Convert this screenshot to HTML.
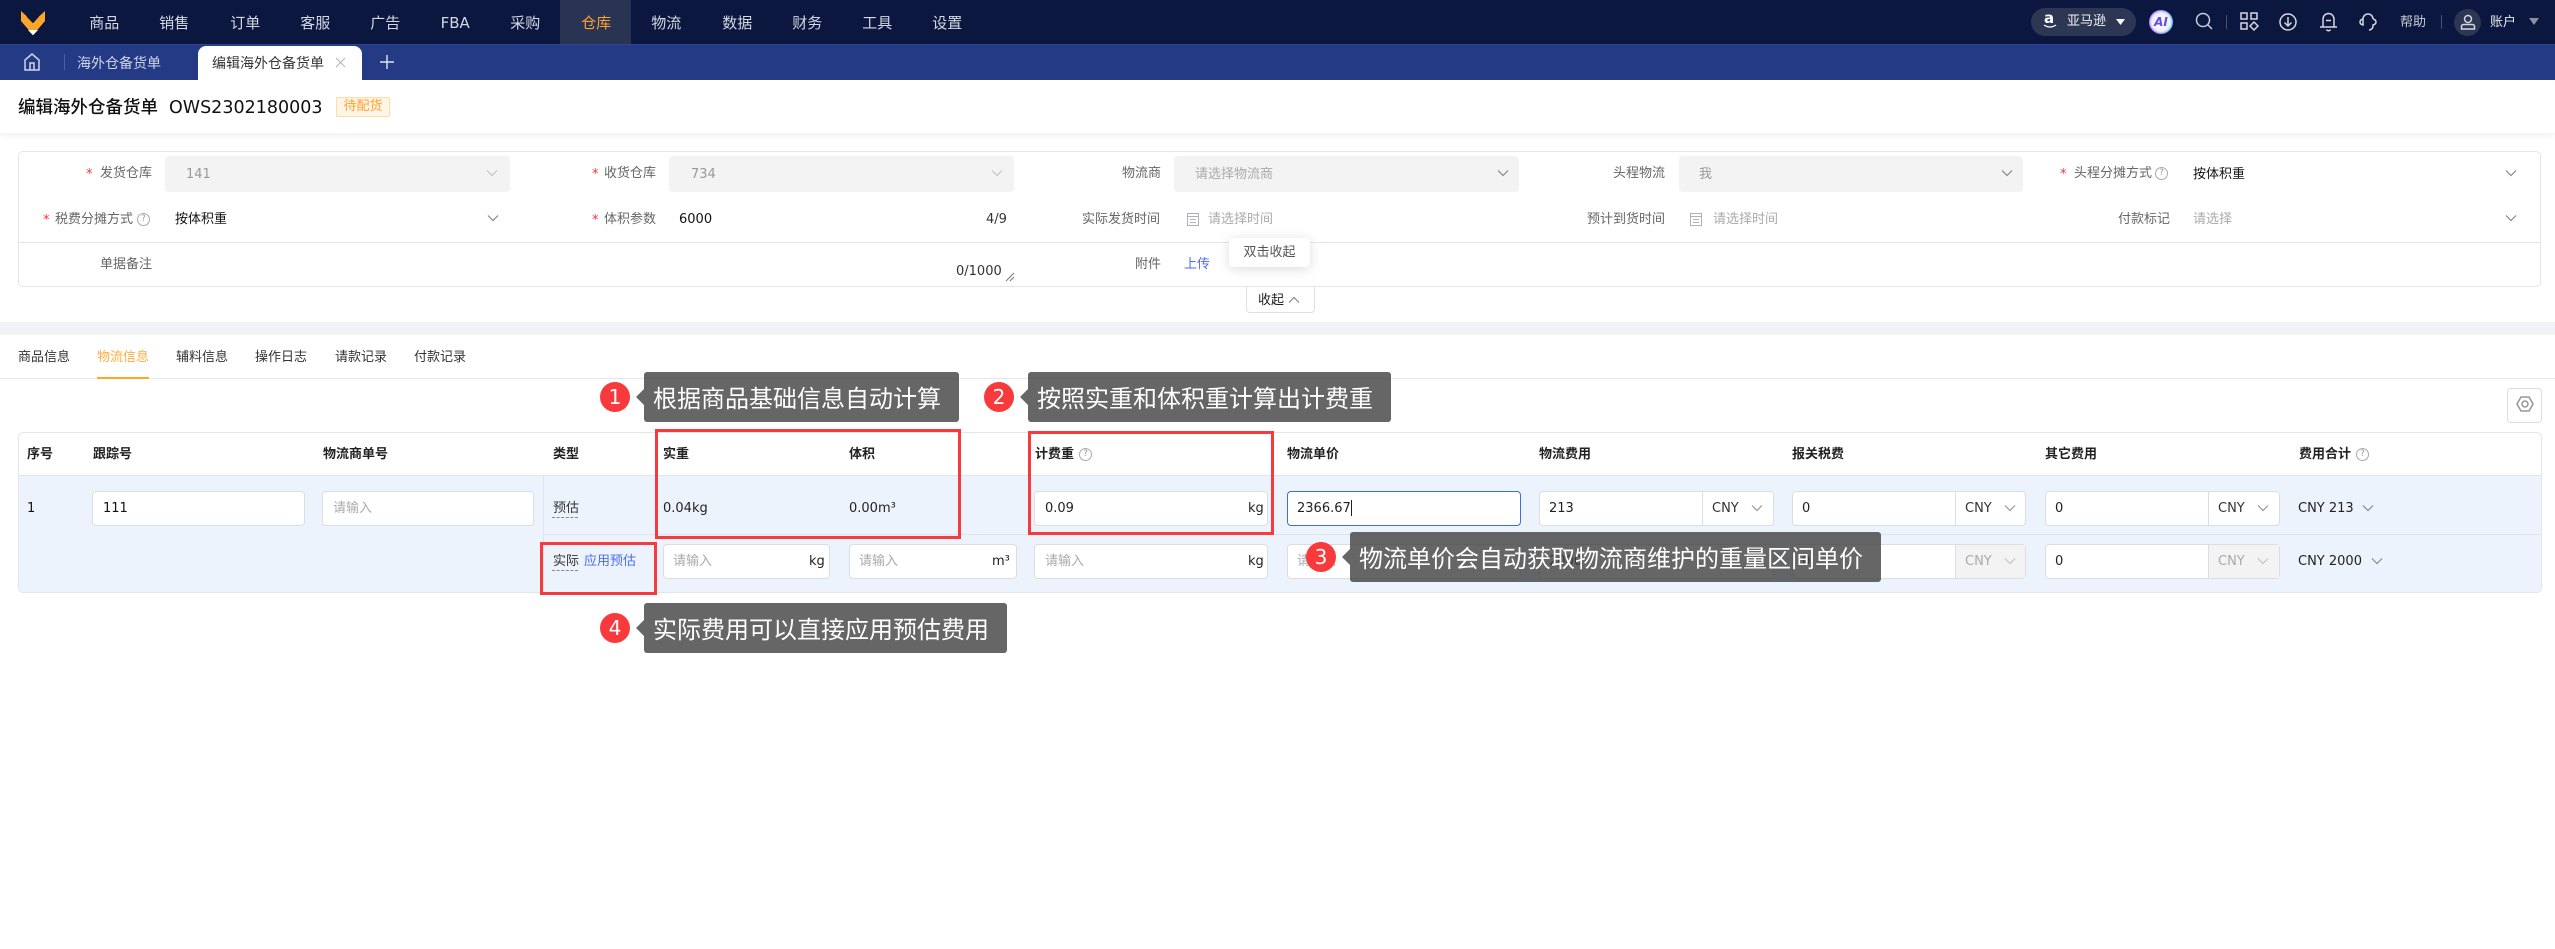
<!DOCTYPE html>
<html lang="zh"><head><meta charset="utf-8"><title>编辑海外仓备货单</title>
<style>
*{box-sizing:border-box}
html,body{margin:0;padding:0;width:2555px;height:949px;overflow:hidden;background:#fff}
body{font-family:"DejaVu Sans","WenQuanYi Zen Hei","Noto Sans CJK SC",sans-serif;font-size:13px;color:#222;position:relative}
.a{position:absolute}
.t{position:absolute;white-space:nowrap;line-height:20px;height:20px;margin-top:1px}
.n{position:absolute;top:13px;width:70.4px;text-align:center;color:#d4d8e2;font-size:15px;line-height:20px;white-space:nowrap}
.l{color:#666}
.r{color:#f5333f}
.g{color:#aaa}
.sel{position:absolute;height:36px;top:156px;background:#f3f3f4;border-radius:4px}
.inp{position:absolute;height:35px;background:#fff;border:1.5px solid #dcdde3;border-radius:4px}
.h{font-weight:700;color:#222}
.tip{position:absolute;height:50px;background:rgba(64,64,64,.8);border-radius:3px;color:#fff;font-family:"Noto Sans CJK SC",sans-serif;font-size:24px;line-height:50px;padding-left:9px;white-space:nowrap;font-weight:400}
.tip:before{content:"";position:absolute;left:-8px;top:17px;border:8px solid transparent;border-left:0;border-right-color:rgba(64,64,64,.8)}
.num{position:absolute;width:30px;height:30px;border-radius:50%;background:#f93a3c;color:#fff;font-size:20px;line-height:30px;text-align:center}
.box{position:absolute;border:3px solid #f93a3c}
svg.i{position:absolute;overflow:visible}
.d{position:absolute;width:1px;background:#dcdde3}
.q{position:absolute;width:13px;height:13px;border:1px solid #aaa;border-radius:50%;color:#999;font-size:9px;line-height:11px;text-align:center}
</style></head><body>
<svg width="0" height="0" style="position:absolute"><defs>
<symbol id="ch" viewBox="0 0 12 12"><path d="M1 3.5L6 8.5L11 3.5" fill="none" stroke="currentColor" stroke-width="1.2"/></symbol>
<symbol id="cal" viewBox="0 0 12 14"><path d="M.5 1.5h11v12H.5zM.5 4.5h11M3 7.5h6M3 10.5h6" fill="none" stroke="currentColor"/></symbol>
</defs></svg>

<!-- top bar -->
<div class="a" style="left:0;top:0;width:2555px;height:44px;background:#0b173e"></div>
<div class="a" style="left:0;top:44px;width:2555px;height:36px;background:#243a85;border-top:1px solid #2b4494"></div>
<div class="a" style="left:560px;top:0;width:71px;height:44px;background:#293352"></div>
<svg class="i" style="left:20px;top:10px" width="26" height="26" viewBox="20 10 26 26">
<path d="M21 11L33 22L45 11V21L33 35L21 21Z" fill="#f9a62a"/>
<path d="M27 16.5L33 22.5L38.5 16.5" fill="none" stroke="#0b173e" stroke-width="1"/>
<path d="M28 30H38L33 35.2Z" fill="#fff"/></svg>
<div class="n" style="left:69px">商品</div><div class="n" style="left:139px">销售</div><div class="n" style="left:210px">订单</div><div class="n" style="left:280px">客服</div><div class="n" style="left:350px">广告</div><div class="n" style="left:420px">FBA</div><div class="n" style="left:490px">采购</div><div class="n" style="left:561px;color:#ff9f2e">仓库</div><div class="n" style="left:631px">物流</div><div class="n" style="left:702px">数据</div><div class="n" style="left:772px">财务</div><div class="n" style="left:842px">工具</div><div class="n" style="left:912px">设置</div>

<div class="a" style="left:2031px;top:8px;width:105px;height:28px;border-radius:14px;background:#2d3652"></div>
<div class="t" style="left:2044px;top:7px;color:#fff;font-weight:700;font-size:15px">a</div>
<svg class="i" style="left:2043px;top:24px" width="14" height="6"><path d="M1 1Q7 5 13 1" fill="none" stroke="#fff" stroke-width="1.3"/></svg>
<div class="t" style="left:2067px;top:11px;color:#eef0f5">亚马逊</div>
<svg class="i" style="left:2116px;top:19px" width="9" height="6"><path d="M0 0H9L4.5 6Z" fill="#fff"/></svg>
<div class="a" style="left:2149px;top:10px;width:24px;height:24px;border-radius:50%;background:radial-gradient(circle,#fff 0,#f1eefe 55%,transparent 72%),linear-gradient(100deg,#a874f5,#8a7cf8 50%,#2cc8ee);text-align:center;color:#5a4fe8;font-weight:700;font-style:italic;font-size:12px;line-height:24px">AI</div>
<svg class="i" style="left:2195px;top:12px" width="18" height="18" fill="none" stroke="#c9ccd4" stroke-width="1.5"><circle cx="8" cy="8" r="6.5"/><path d="M12.5 12.5L17 17"/></svg>
<div class="a" style="left:2226px;top:15px;width:1px;height:14px;background:#4a5270"></div>
<svg class="i" style="left:2240px;top:12px" width="18" height="18" fill="none" stroke="#d5d7dd" stroke-width="1.5"><path d="M1 1h6v6H1zM11 1h6v6h-6zM1 11h6v6H1zM14 10l4 4-4 4-4-4z"/></svg>
<svg class="i" style="left:2279px;top:13px" width="18" height="18" fill="none" stroke="#d5d7dd" stroke-width="1.5"><circle cx="9" cy="9" r="8"/><path d="M9 4v9M5.500 9.500L9 13l3.500-3.500"/></svg>
<svg class="i" style="left:2319px;top:12px" width="19" height="20" fill="none" stroke="#d5d7dd" stroke-width="1.5"><path d="M4 15V7a5.500 5.500 0 0 1 11 0v8M1 15h17M7 8.500h5M7.500 17.500a2.200 2.200 0 0 0 4 0"/></svg>
<svg class="i" style="left:2359px;top:12px" width="18" height="20" fill="none" stroke="#d5d7dd" stroke-width="1.500"><path d="M4 7a5 5 0 0 1 10 0M4 7c-2 .5-3 1.500-3 3s1 2.500 3 3zM14 7c2 .5 3 1.500 3 3s-1 2.500-3 3v1a4 4 0 0 1-4 4"/></svg>
<div class="t" style="left:2400px;top:12px;color:#c9ccd4">帮助</div>
<div class="a" style="left:2441px;top:15px;width:1px;height:14px;background:#4a5270"></div>
<div class="a" style="left:2454px;top:9px;width:27px;height:27px;border-radius:50%;background:#2d3652"></div>
<svg class="i" style="left:2460px;top:14px" width="16" height="16" fill="none" stroke="#d5d7dd" stroke-width="1.500"><circle cx="8" cy="5" r="3.500"/><path d="M1.500 15v-2.500a2 2 0 0 1 2-2h9a2 2 0 0 1 2 2V15z"/></svg>
<div class="t" style="left:2490px;top:12px;color:#e8eaf0">账户</div>
<svg class="i" style="left:2529px;top:18px" width="10" height="7"><path d="M0 0H10L5 7Z" fill="#8b90a0"/></svg>

<!-- tabs -->
<svg class="i" style="left:24px;top:53px" width="16" height="18" fill="none" stroke="#cfd6ea" stroke-width="1.500"><path d="M1 17V7L8 1l7 6v10zM6 17v-7h4v7"/></svg>
<div class="a" style="left:64px;top:54px;width:1px;height:16px;background:#4a5fa3"></div>
<div class="t" style="left:77px;top:53px;color:#cfd6ea;font-size:14px">海外仓备货单</div>
<div class="a" style="left:198px;top:46px;width:164px;height:34px;background:#fff;border-radius:8px 8px 0 0"></div>
<div class="t" style="left:212px;top:53px;color:#333;font-size:14px">编辑海外仓备货单</div>
<svg class="i" style="left:336px;top:58px" width="9" height="9" fill="none" stroke="#aeb4c6" stroke-width="1"><path d="M0 0L9 9M9 0L0 9"/></svg>
<svg class="i" style="left:380px;top:55px" width="14" height="14" fill="none" stroke="#dfe4f2" stroke-width="1.400"><path d="M7 0v14M0 7h14"/></svg>

<!-- header -->
<div class="a" style="left:0;top:80px;width:2555px;height:53px;background:#fff;border-radius:6px 6px 0 0;box-shadow:0 3px 6px rgba(0,0,0,.06)"></div>
<div class="t" style="left:18px;top:97px;font-size:17.5px;color:#111;font-weight:500">编辑海外仓备货单</div>
<div class="t" style="left:169px;top:97px;font-size:17.5px;color:#111">OWS2302180003</div>
<div class="a" style="left:336px;top:97px;width:54px;height:20px;background:#fff5e6;border:1px solid #fcdca8;border-radius:2px;color:#ff9f2e;text-align:center;line-height:18px">待配货</div>

<!-- form -->
<div class="a" style="left:18px;top:151px;width:2523px;height:136px;border:1.500px solid #e4e5e9;border-radius:5px"></div>
<div class="a" style="left:19px;top:242px;width:2521px;height:1px;background:#e4e5e9"></div>

<div class="sel" style="left:165px;width:345px"></div>
<div class="sel" style="left:669px;width:345px"></div>
<div class="sel" style="left:1174px;width:345px"></div>
<div class="sel" style="left:1679px;width:344px"></div>

<div class="t r" style="left:86px;top:164px">*</div><div class="t l" style="left:100px;top:163px">发货仓库</div>
<div class="t g" style="left:186px;top:164px;color:#999">141</div>
<svg class="i" style="left:486px;top:167px;color:#c4c4c4" width="12" height="12"><use href="#ch"/></svg>
<div class="t r" style="left:592px;top:164px">*</div><div class="t l" style="left:604px;top:163px">收货仓库</div>
<div class="t" style="left:691px;top:164px;color:#999">734</div>
<svg class="i" style="left:991px;top:167px;color:#c4c4c4" width="12" height="12"><use href="#ch"/></svg>
<div class="t l" style="left:1122px;top:163px">物流商</div>
<div class="t g" style="left:1195px;top:164px">请选择物流商</div>
<svg class="i" style="left:1497px;top:167px;color:#888" width="12" height="12"><use href="#ch"/></svg>
<div class="t l" style="left:1613px;top:163px">头程物流</div>
<div class="t" style="left:1699px;top:164px;color:#999">我</div>
<svg class="i" style="left:2001px;top:167px;color:#888" width="12" height="12"><use href="#ch"/></svg>
<div class="t r" style="left:2060px;top:164px">*</div><div class="t l" style="left:2074px;top:163px">头程分摊方式</div>
<div class="q" style="left:2155px;top:167px">?</div>
<div class="t" style="left:2193px;top:164px;color:#111">按体积重</div>
<svg class="i" style="left:2505px;top:167px;color:#888" width="12" height="12"><use href="#ch"/></svg>

<div class="t r" style="left:43px;top:210px">*</div><div class="t l" style="left:55px;top:209px">税费分摊方式</div>
<div class="q" style="left:137px;top:213px">?</div>
<div class="t" style="left:175px;top:209px;color:#111">按体积重</div>
<svg class="i" style="left:487px;top:212px;color:#888" width="12" height="12"><use href="#ch"/></svg>
<div class="t r" style="left:592px;top:210px">*</div><div class="t l" style="left:604px;top:209px">体积参数</div>
<div class="t" style="left:679px;top:209px;color:#111">6000</div>
<div class="t" style="left:986px;top:209px;color:#333">4/9</div>
<div class="t l" style="left:1082px;top:209px">实际发货时间</div>
<svg class="i" style="left:1187px;top:212px;color:#aab0bc" width="12" height="14"><use href="#cal"/></svg>
<div class="t g" style="left:1208px;top:209px">请选择时间</div>
<div class="t l" style="left:1587px;top:209px">预计到货时间</div>
<svg class="i" style="left:1690px;top:212px;color:#aab0bc" width="12" height="14"><use href="#cal"/></svg>
<div class="t g" style="left:1713px;top:209px">请选择时间</div>
<div class="t l" style="left:2118px;top:209px">付款标记</div>
<div class="t g" style="left:2193px;top:209px">请选择</div>
<svg class="i" style="left:2505px;top:212px;color:#888" width="12" height="12"><use href="#ch"/></svg>

<div class="t l" style="left:100px;top:254px">单据备注</div>
<div class="t" style="left:956px;top:261px;color:#333">0/1000</div>
<svg class="i" style="left:1006px;top:273px" width="8" height="8" stroke="#777" fill="none"><path d="M0 8L8 0M4 8L8 4"/></svg>
<div class="t l" style="left:1135px;top:254px">附件</div>
<div class="t" style="left:1184px;top:254px;color:#4a6cf7">上传</div>
<div class="a" style="left:1229px;top:238px;width:81px;height:29px;background:#fff;border-radius:4px;box-shadow:0 2px 12px rgba(0,0,0,.14);text-align:center;line-height:29px;color:#555">双击收起</div>
<div class="a" style="left:1246px;top:287px;width:69px;height:26px;background:#fff;border:1px solid #dedfe3;border-top:0;border-radius:0 0 4px 4px"></div>
<div class="t" style="left:1258px;top:290px;color:#222">收起</div>
<svg class="i" style="left:1288px;top:294px;color:#888;transform:rotate(180deg)" width="12" height="12"><use href="#ch"/></svg>

<!-- band -->
<div class="a" style="left:0;top:322px;width:2555px;height:13px;background:#f2f3f7"></div>

<!-- sub tabs -->
<div class="t" style="left:18px;top:347px;color:#333">商品信息</div>
<div class="t" style="left:97px;top:347px;color:#ffad3d">物流信息</div>
<div class="t" style="left:176px;top:347px;color:#333">辅料信息</div>
<div class="t" style="left:255px;top:347px;color:#333">操作日志</div>
<div class="t" style="left:335px;top:347px;color:#333">请款记录</div>
<div class="t" style="left:414px;top:347px;color:#333">付款记录</div>
<div class="a" style="left:0;top:378px;width:2555px;height:1px;background:#e6e7eb"></div>
<div class="a" style="left:97px;top:377px;width:52px;height:2px;background:#ffa826"></div>

<!-- settings -->
<div class="a" style="left:2507px;top:388px;width:35px;height:35px;border:1px solid #dcdde3;border-radius:4px"></div>
<svg class="i" style="left:2516px;top:396px" width="18" height="16" fill="none" stroke="#999" stroke-width="1.600"><path d="M5 1h8l4 7-4 7H5L1 8z"/><circle cx="9" cy="8" r="3"/></svg>

<!-- table -->
<div class="a" style="left:18px;top:432px;width:2524px;height:161px;border:1.500px solid #e4e5e9;border-radius:5px;overflow:hidden"><div class="a" style="left:0;top:42px;width:2524px;height:118px;background:#edf3fc;border-top:1px solid #e2e5ec"></div></div>
<div class="a" style="left:543px;top:475px;width:1px;height:117px;background:#e0e4ec"></div>
<div class="a" style="left:543px;top:534px;width:1998px;height:1px;background:#e0e4ec"></div>

<div class="t h" style="left:27px;top:444px">序号</div>
<div class="t h" style="left:93px;top:444px">跟踪号</div>
<div class="t h" style="left:323px;top:444px">物流商单号</div>
<div class="t h" style="left:553px;top:444px">类型</div>
<div class="t h" style="left:663px;top:444px">实重</div>
<div class="t h" style="left:849px;top:444px">体积</div>
<div class="t h" style="left:1035px;top:444px">计费重</div><div class="q" style="left:1079px;top:448px">?</div>
<div class="t h" style="left:1287px;top:444px">物流单价</div>
<div class="t h" style="left:1539px;top:444px">物流费用</div>
<div class="t h" style="left:1792px;top:444px">报关税费</div>
<div class="t h" style="left:2045px;top:444px">其它费用</div>
<div class="t h" style="left:2299px;top:444px">费用合计</div><div class="q" style="left:2356px;top:448px">?</div>

<!-- row 1 -->
<div class="t" style="left:27px;top:498px;color:#111">1</div>
<div class="inp" style="left:92px;top:491px;width:213px"></div><div class="t" style="left:103px;top:498px;color:#111">111</div>
<div class="inp" style="left:322px;top:491px;width:212px"></div><div class="t g" style="left:333px;top:498px">请输入</div>
<div class="t" style="left:553px;top:498px;color:#333">预估</div><div class="a" style="left:552px;top:517px;width:26px;border-top:1px dashed #888"></div>
<div class="t" style="left:663px;top:498px;color:#222">0.04kg</div>
<div class="t" style="left:849px;top:498px;color:#222">0.00m³</div>
<div class="inp" style="left:1034px;top:491px;width:234px"></div><div class="t" style="left:1045px;top:498px;color:#222">0.09</div><div class="t" style="left:1248px;top:498px;color:#222">kg</div>
<div class="inp" style="left:1287px;top:491px;width:234px;border-color:#3b6fe0"></div><div class="t" style="left:1297px;top:498px;color:#222">2366.67</div><div class="a" style="left:1351px;top:500px;width:1px;height:16px;background:#222"></div>
<div class="inp" style="left:1539px;top:491px;width:235px"></div><div class="d" style="left:1702px;top:492px;height:33px"></div><div class="t" style="left:1549px;top:498px;color:#222">213</div><div class="t" style="left:1712px;top:498px;color:#333">CNY</div>
<svg class="i" style="left:1751px;top:502px;color:#999" width="12" height="12"><use href="#ch"/></svg>
<div class="inp" style="left:1792px;top:491px;width:234px"></div><div class="d" style="left:1955px;top:492px;height:33px"></div><div class="t" style="left:1802px;top:498px;color:#222">0</div><div class="t" style="left:1965px;top:498px;color:#333">CNY</div>
<svg class="i" style="left:2004px;top:502px;color:#999" width="12" height="12"><use href="#ch"/></svg>
<div class="inp" style="left:2045px;top:491px;width:235px"></div><div class="d" style="left:2208px;top:492px;height:33px"></div><div class="t" style="left:2055px;top:498px;color:#222">0</div><div class="t" style="left:2218px;top:498px;color:#333">CNY</div>
<svg class="i" style="left:2257px;top:502px;color:#999" width="12" height="12"><use href="#ch"/></svg>
<div class="t" style="left:2298px;top:498px;color:#222">CNY 213</div>
<svg class="i" style="left:2362px;top:502px;color:#888" width="12" height="12"><use href="#ch"/></svg>

<!-- row 2 -->
<div class="t" style="left:553px;top:551px;color:#333">实际</div><div class="a" style="left:552px;top:570px;width:26px;border-top:1px dashed #888"></div>
<div class="t" style="left:584px;top:551px;color:#4a6cf7">应用预估</div>
<div class="inp" style="left:663px;top:544px;width:167px"></div><div class="t g" style="left:673px;top:551px">请输入</div><div class="t" style="left:809px;top:551px;color:#222">kg</div>
<div class="inp" style="left:849px;top:544px;width:168px"></div><div class="t g" style="left:859px;top:551px">请输入</div><div class="t" style="left:992px;top:551px;color:#222">m³</div>
<div class="inp" style="left:1034px;top:544px;width:234px"></div><div class="t g" style="left:1045px;top:551px">请输入</div><div class="t" style="left:1248px;top:551px;color:#222">kg</div>
<div class="inp" style="left:1287px;top:544px;width:234px"></div><div class="t g" style="left:1297px;top:551px">请输入</div>
<div class="inp" style="left:1539px;top:544px;width:235px"></div><div class="t" style="left:1549px;top:551px;color:#222">2000</div>
<div class="inp" style="left:1792px;top:544px;width:234px"></div><div class="t" style="left:1802px;top:551px;color:#222">0</div>
<div class="a" style="left:1955px;top:545px;width:70px;height:33px;background:#f3f3f4;border-left:1px solid #dcdde3"></div><div class="t" style="left:1965px;top:551px;color:#aaa">CNY</div>
<svg class="i" style="left:2004px;top:555px;color:#c4c4c4" width="12" height="12"><use href="#ch"/></svg>
<div class="inp" style="left:2045px;top:544px;width:235px"></div><div class="t" style="left:2055px;top:551px;color:#222">0</div>
<div class="a" style="left:2208px;top:545px;width:71px;height:33px;background:#f3f3f4;border-left:1px solid #dcdde3"></div><div class="t" style="left:2218px;top:551px;color:#aaa">CNY</div>
<svg class="i" style="left:2257px;top:555px;color:#c4c4c4" width="12" height="12"><use href="#ch"/></svg>
<div class="t" style="left:2298px;top:551px;color:#222">CNY 2000</div>
<svg class="i" style="left:2371px;top:555px;color:#888" width="12" height="12"><use href="#ch"/></svg>

<!-- annotations -->
<div class="box" style="left:655px;top:429px;width:306px;height:110px"></div>
<div class="box" style="left:1028px;top:431px;width:246px;height:104px"></div>
<div class="box" style="left:540px;top:542px;width:117px;height:53px"></div>

<div class="num" style="left:600px;top:382px">1</div><div class="tip" style="left:644px;top:372px;width:315px">根据商品基础信息自动计算</div>
<div class="num" style="left:984px;top:382px">2</div><div class="tip" style="left:1028px;top:372px;width:363px">按照实重和体积重计算出计费重</div>
<div class="num" style="left:1306px;top:542px">3</div><div class="tip" style="left:1350px;top:532px;width:531px">物流单价会自动获取物流商维护的重量区间单价</div>
<div class="num" style="left:600px;top:613px">4</div><div class="tip" style="left:644px;top:603px;width:363px">实际费用可以直接应用预估费用</div>
</body></html>
